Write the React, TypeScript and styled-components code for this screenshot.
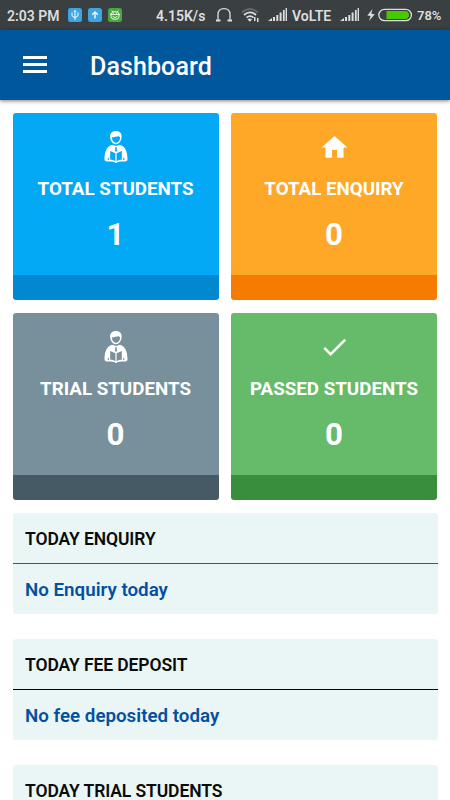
import React from 'react';
import styled, { createGlobalStyle } from 'styled-components';

const GlobalStyle = createGlobalStyle`
  * { box-sizing: border-box; }
  html, body { margin: 0; padding: 0; }
  body { background: #fff; font-family: Roboto, "Liberation Sans", sans-serif; overflow: hidden; }
  svg { display: block; flex: none; }
`;

const Screen = styled.div`
  width: 450px;
  height: 800px;
  overflow: hidden;
  background: #fff;
`;

const StatusBar = styled.header`
  height: 30px;
  padding: 0 8px 0 7px;
  display: flex;
  align-items: center;
  justify-content: space-between;
  background: #3a3f41;
  color: #dcdddd;
  font-size: 14px;
  font-weight: 600;
  line-height: 30px;
  white-space: nowrap;
`;

const StatusGroup = styled.div`
  display: flex;
  align-items: center;
`;

const StatusText = styled.span<{ $width: number; $size?: number }>`
  width: ${p => p.$width}px;
  font-size: ${p => p.$size ?? 14}px;
  padding-top: 1px;
`;

const Badge = styled.span<{ $color: string }>`
  width: 14px;
  height: 14px;
  margin-right: 6px;
  border-radius: 2.5px;
  background: ${p => p.$color};
`;

const AppBar = styled.nav`
  position: relative;
  height: 70px;
  padding-left: 23px;
  display: flex;
  align-items: center;
  background: #01579b;
  box-shadow: 0 1px 4px rgba(0, 0, 0, 0.5);
`;

const MenuButton = styled.button`
  width: 24px;
  height: 17px;
  padding: 0;
  border: 0;
  background: none;
  display: flex;
  flex-direction: column;
  justify-content: space-between;
  margin: -1px 43px 0 0;
`;

const MenuLine = styled.span`
  height: 3px;
  width: 24px;
  background: #fff;
`;

const Title = styled.h1`
  margin: 3px 0 0;
  font-size: 25px;
  font-weight: 500;
  letter-spacing: 0.1px;
  line-height: 30px;
  color: #fff;
`;

const Content = styled.main`
  padding: 12.5px 12.5px 0;
`;

const CardGrid = styled.section`
  display: grid;
  grid-template-columns: 206px 206px;
  grid-auto-rows: 187.5px;
  gap: 12.5px;
`;

const Card = styled.article<{ $color: string; $edge: string }>`
  display: flex;
  flex-direction: column;
  align-items: center;
  border-radius: 3px;
  overflow: hidden;
  background: linear-gradient(${p => p.$color} 162.5px, ${p => p.$edge} 162.5px);
  color: #fff;
`;

const CardIcon = styled.div`
  height: 32px;
  margin-top: 18.5px;
  display: flex;
  align-items: center;
`;

const CardTitle = styled.h2`
  margin: 13.5px 0 0;
  font-size: 18.75px;
  line-height: 24px;
  font-weight: 700;
  white-space: nowrap;
`;

const CardValue = styled.div`
  margin-top: 15px;
  font-size: 31.25px;
  line-height: 38px;
  font-weight: 700;
`;

const Panels = styled.section`
  margin-top: 12.5px;
  display: flex;
  flex-direction: column;
  gap: 25px;
`;

const Panel = styled.article`
  height: 101.25px;
  width: 425px;
  border-radius: 3px;
  background: #eaf6f6;
`;

const PanelTitle = styled.h3<{ $line: string }>`
  margin: 0;
  height: 51px;
  padding: 2px 12.5px 0;
  border-bottom: 1px solid ${p => p.$line};
  font-size: 17.5px;
  line-height: 48px;
  font-weight: 600;
  letter-spacing: -0.1px;
  color: #0b0b0b;
`;

const PanelText = styled.p`
  margin: 0;
  padding: 1px 12.5px 0;
  font-size: 18.75px;
  line-height: 50px;
  font-weight: 600;
  color: #0450a0;
`;

const ReaderIcon = ({ hole }: { hole: string }) => (
  <svg width="24" height="32" viewBox="0 0 24 32">
    <path fill="#fff" d="M11.6 0C15.9 0 18 2.5 17.6 6.2C17.3 10.2 15 13.2 12 13.2S6.5 10.2 6.1 6.4C5.7 2.6 8 0 11.6 0Z" />
    <path fill={hole} d="M7.7 6.3C9.5 6.7 10.7 6.2 11.8 5.6C12.6 6.1 14 5.1 14.5 4.9C15 5.6 15.6 6 16.2 6.2C15.9 9.2 14.6 11.7 12 11.7S8 9.3 7.7 6.3Z" />
    <path fill="#fff" d="M8 13.8L12 15.1L16 13.8C20.9 15.2 23.5 20 23.5 28.5C23.5 30.2 21.8 30.6 19.2 30.6C16.5 30.6 14 30.8 12 32C10 30.8 7.5 30.6 4.8 30.6C2.2 30.6.5 30.2.5 28.5C.5 20 3.1 15.2 8 13.8Z" />
    <path fill={hole} d="M11.3 16h1.3l.3 4-.9 1-1-1ZM6.2 20.1L11.4 22.3V30.2C9.8 29.1 8 28.8 6.2 28.8ZM17.8 20.1L12.6 22.3V30.2C14.2 29.1 16 28.8 17.8 28.8ZM4 25.5L5.1 29.1H3.7ZM20 25.5L18.9 29.1H20.3Z" />
  </svg>
);

const HomeIcon = () => (
  <svg width="31" height="31" viewBox="0 0 24 24" fill="#fff">
    <path d="M10 20v-6h4v6h5v-8h3L12 3 2 12h3v8z" />
  </svg>
);

const CheckIcon = () => (
  <svg width="31" height="31" viewBox="0 .4 24 24" fill="#fff">
    <path d="M9 16.2 4.8 12l-1.4 1.4L9 19 21 7l-1.4-1.4z" />
  </svg>
);

const SignalIcon = () => (
  <svg width="20" height="14" viewBox="0 0 20 14" fill="#dcdddd">
    <path d="M0 13l4-3v3zM5 9h2v4H5zM8.3 7h2v6h-2zM11.6 4.5h2V13h-2zM14.9 2h1.8v11h-1.8zM17.6 0h1.4v13h-1.4z" />
  </svg>
);

const Gap = styled.span<{ $w: number }>`
  width: ${p => p.$w}px;
`;

const cards = [
  { title: 'TOTAL STUDENTS', value: 1, color: '#03a9f4', edge: '#0288d1', icon: <ReaderIcon hole="#03a9f4" /> },
  { title: 'TOTAL ENQUIRY', value: 0, color: '#ffa726', edge: '#f57c00', icon: <HomeIcon /> },
  { title: 'TRIAL STUDENTS', value: 0, color: '#78909c', edge: '#455a64', icon: <ReaderIcon hole="#78909c" /> },
  { title: 'PASSED STUDENTS', value: 0, color: '#66bb6a', edge: '#388e3c', icon: <CheckIcon /> },
];

const panels = [
  { title: 'TODAY ENQUIRY', text: 'No Enquiry today', line: '#4f5555' },
  { title: 'TODAY FEE DEPOSIT', text: 'No fee deposited today', line: '#000' },
  { title: 'TODAY TRIAL STUDENTS', text: '', line: '#000' },
];

export default function App() {
  return (
    <Screen>
      <GlobalStyle />
      <StatusBar>
        <StatusGroup>
          <StatusText $width={61}>2:03 PM</StatusText>
          <Badge $color="#3da5df">
            <svg width="14" height="14" viewBox="0 0 14 14" fill="none" stroke="#fff" strokeWidth="1">
              <path d="M7 3v9M4 4.5v2.7Q4 9 7 9.4Q10 9 10 7.2V4.5M5.8 3.8L7 2.3L8.2 3.8" />
            </svg>
          </Badge>
          <Badge $color="#3da5df">
            <svg width="14" height="14" viewBox="0 0 14 14" fill="none" stroke="#fff" strokeWidth="1.3">
              <path d="M7 10.5V4M4.2 6.8L7 4L9.8 6.8" />
            </svg>
          </Badge>
          <Badge $color="#48aa3c">
            <svg width="14" height="14" viewBox="0 0 14 14" fill="none" stroke="#fff" strokeWidth="0.9">
              <path d="M3.7 2.3L5 4M10.3 2.3L9 4M3 6.2Q3 3.7 7 3.7T11 6.2V8.5Q11 11.4 7 11.4T3 8.5ZM2.2 6.4h9.6M4.7 8.5Q7 10.6 9.3 8.5M5 5.2h.8M8.2 5.2H9" />
            </svg>
          </Badge>
        </StatusGroup>
        <StatusGroup>
          <StatusText $width={59}>4.15K/s</StatusText>
          <svg width="18" height="16" viewBox="0 0 18 16" fill="none" stroke="#dcdddd" strokeWidth="1.3">
            <path d="M3 14V7.5C3 3.5 5.2 1.6 9 1.6S15 3.5 15 7.5V14" />
            <path strokeWidth="2" d="M1 13.5H5.5M12.5 13.5H17" />
          </svg>
          <Gap $w={8} />
          <svg width="20" height="16" viewBox="0 0 20 16" fill="none" stroke="#dcdddd" strokeWidth="1.8">
            <path stroke="#64686a" d="M1 5.5Q9 -1.5 17 5.5" />
            <path d="M3 8Q9 2.7 15 8M5.5 10.7Q9 7.6 12.5 10.7" />
            <path fill="#dcdddd" stroke="none" d="M6.5 12.5Q9 10.7 11 12.5L9 14.8ZM13 10h1.5v4H13zM16 11h1.5v4H16z" />
          </svg>
          <Gap $w={7} />
          <SignalIcon />
          <Gap $w={4} />
          <StatusText $width={48}>VoLTE</StatusText>
          <SignalIcon />
          <Gap $w={7} />
          <svg width="9" height="14" viewBox="0 0 9 14" fill="#dcdddd">
            <path d="M5.5 1L.3 7.6L3.6 8L2 13L7.7 6.2L4.3 5.8Z" />
          </svg>
          <Gap $w={2} />
          <svg width="35" height="14" viewBox="0 0 35 14">
            <rect x=".8" y="1.3" width="32.6" height="11.4" rx="5.7" fill="none" stroke="#dcdddd" strokeWidth="1.3" />
            <path fill="#48c800" d="M8.5 3h18.500a4 4 0 0 1 0 8H8.5z" />
          </svg>
          <Gap $w={4} />
          <StatusText $width={25} $size={13}>78%</StatusText>
        </StatusGroup>
      </StatusBar>
      <AppBar>
        <MenuButton aria-label="Menu"><MenuLine /><MenuLine /><MenuLine /></MenuButton>
        <Title>Dashboard</Title>
      </AppBar>
      <Content>
        <CardGrid>
          {cards.map(card => (
            <Card key={card.title} $color={card.color} $edge={card.edge}>
              <CardIcon>{card.icon}</CardIcon>
              <CardTitle>{card.title}</CardTitle>
              <CardValue>{card.value}</CardValue>
            </Card>
          ))}
        </CardGrid>
        <Panels>
          {panels.map(panel => (
            <Panel key={panel.title}>
              <PanelTitle $line={panel.line}>{panel.title}</PanelTitle>
              <PanelText>{panel.text}</PanelText>
            </Panel>
          ))}
        </Panels>
      </Content>
    </Screen>
  );
}
